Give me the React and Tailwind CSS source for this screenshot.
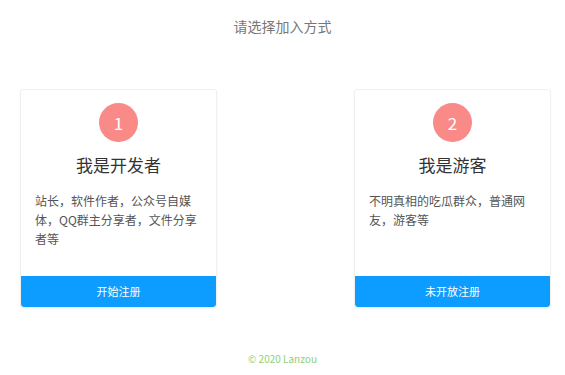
import React from "react";

const cards = [
  {
    num: 1,
    title: "我是开发者",
    desc: "站长，软件作者，公众号自媒体，QQ群主分享者，文件分享者等",
    action: "开始注册",
  },
  {
    num: 2,
    title: "我是游客",
    desc: "不明真相的吃瓜群众，普通网友，游客等",
    action: "未开放注册",
  },
];

const Card = ({ card }) => (
  <div className="w-[197px] h-[219px] flex flex-col bg-white border border-[#f0f0f0] rounded-[3px] shadow-[0_1px_3px_rgba(0,0,0,0.04)] overflow-hidden">
    <div className="flex-1 flex flex-col items-center pt-[13px]">
      <div className="w-[39px] h-[39px] rounded-full bg-[#f98a87] flex items-center justify-center text-white text-[17px]">
        {card.num}
      </div>
      <h2 className="mt-[11px] text-[17px] leading-[24px] text-[#333]">{card.title}</h2>
      <p className="mt-[14px] px-[14px] self-stretch text-[12px] leading-[19px] text-[#555]">
        {card.desc}
      </p>
    </div>
    <button className="h-[31px] w-full bg-[#0d9cff] text-white text-[11px] rounded-b-[3px]">
      {card.action}
    </button>
  </div>
);

export default function App() {
  return (
    <div
      className="w-[565px] h-[375px] bg-white flex flex-col"
      style={{ fontFamily: '"Noto Sans CJK SC", "Noto Sans", sans-serif' }}
    >
      <div className="pt-[16px] text-center text-[14px] leading-[20px] text-[#777]">
        请选择加入方式
      </div>
      <div className="mt-[53px] flex justify-between pl-[20px] pr-[14px]">
        {cards.map((c) => (
          <Card key={c.num} card={c} />
        ))}
      </div>
      <div className="mt-[44px] text-center text-[10px] leading-[14px] text-[#8fcf7a]">
        © 2020 Lanzou
      </div>
    </div>
  );
}
